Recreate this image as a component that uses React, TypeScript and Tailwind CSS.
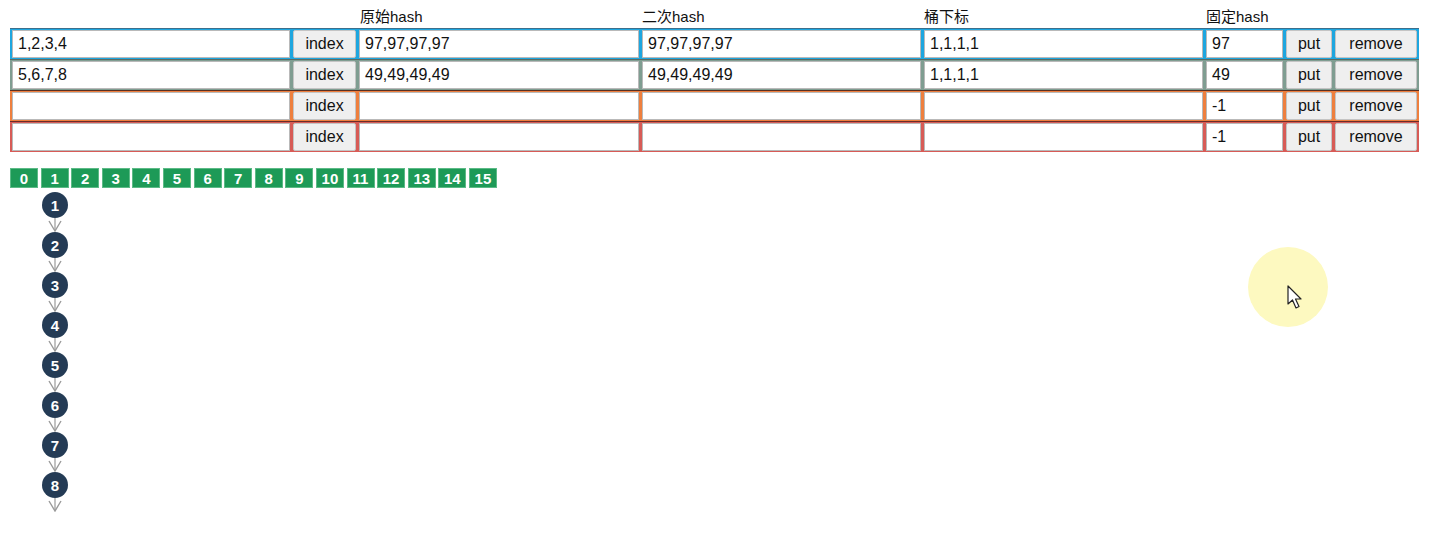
const rows = [
  { key: '1,2,3,4', raw: '97,97,97,97', second: '97,97,97,97', idx: '1,1,1,1', fixed: '97', bg: 'bg-[#1ea6df]', top: 'border-[#3d6f8c]' },
  { key: '5,6,7,8', raw: '49,49,49,49', second: '49,49,49,49', idx: '1,1,1,1', fixed: '49', bg: 'bg-[#7f9d91]', top: 'border-[#5a6c64]' },
  { key: '', raw: '', second: '', idx: '', fixed: '-1', bg: 'bg-[#ee7f3e]', top: 'border-[#5a2f22]' },
  { key: '', raw: '', second: '', idx: '', fixed: '-1', bg: 'bg-[#d75b56]', top: 'border-[#6a2c2a]' },
];

const cols = 'grid grid-cols-[278px_63px_280px_279px_279px_77px_46px_82px] gap-x-[3px]';

function Field({ value }: { value: string }) {
  return (
    <div className="h-[28px] bg-white border border-[#b9b9b9] px-[5px] flex items-center text-[16px] text-[#111] leading-none">
      {value}
    </div>
  );
}

function Btn({ label }: { label: string }) {
  return (
    <div className="h-[28px] bg-[#efefef] border border-[#c4c4c4] rounded-[2px] flex items-center justify-center text-[16px] text-[#111] leading-none">
      {label}
    </div>
  );
}

function Arrow() {
  return (
    <svg width="30" height="14" viewBox="0 0 30 14" className="block">
      <line x1="15" y1="0" x2="15" y2="13" stroke="#9a9a9a" strokeWidth="1.2" />
      <polyline points="9,3 15,13 21,3" fill="none" stroke="#9a9a9a" strokeWidth="1.4" />
    </svg>
  );
}

export default function App() {
  return (
    <div className="relative w-[1454px] h-[539px] bg-white overflow-hidden font-['Liberation_Sans','Noto_Sans_CJK_SC',sans-serif]">
      <div className="pl-[12px] pt-[6px]">
        {/* column titles */}
        <div className={`${cols} h-[22px] items-end pb-[1px] text-[15px] text-[#111]`}>
          <div />
          <div />
          <div className="pl-[1px]">原始hash</div>
          <div>二次hash</div>
          <div>桶下标</div>
          <div>固定hash</div>
          <div />
          <div />
        </div>
      </div>

      <div className="ml-[10px] w-[1409px]">
        {rows.map((r, i) => (
          <div key={i} className={`${r.bg} ${r.top} border-t px-[2px] pt-[1px] pb-[1px] ${cols}`}>
            <Field value={r.key} />
            <Btn label="index" />
            <Field value={r.raw} />
            <Field value={r.second} />
            <Field value={r.idx} />
            <Field value={r.fixed} />
            <Btn label="put" />
            <Btn label="remove" />
          </div>
        ))}
      </div>

      {/* buckets */}
      <div className="ml-[10px] mt-[16px] flex gap-[2.6px]">
        {Array.from({ length: 16 }, (_, i) => (
          <div
            key={i}
            className="w-[28px] h-[20px] bg-[#1d9a57] border border-[#5cba86] flex items-center justify-center text-white font-bold text-[15px] leading-none"
          >
            {i}
          </div>
        ))}
      </div>

      {/* chain in bucket 1 */}
      <div className="ml-[40px] mt-[4px] flex flex-col items-center w-[30px]">
        {[1, 2, 3, 4, 5, 6, 7, 8].map((n) => (
          <div key={n} className="flex flex-col items-center">
            <div className="w-[26px] h-[26px] rounded-full bg-[#243b55] flex items-center justify-center text-white font-bold text-[15px] leading-none">
              {n}
            </div>
            <Arrow />
          </div>
        ))}
      </div>

      {/* cursor highlight */}
      <div className="absolute left-[1248px] top-[247px] w-[80px] h-[80px] rounded-full bg-[#fdf9c0]" />
      <svg className="absolute left-[1287px] top-[285px]" width="16" height="26" viewBox="0 0 16 26">
        <path d="M1 1 L1 19 L5.5 15 L9 23 L12 21.5 L8.5 14 L14 14 Z" fill="#fff" stroke="#222" strokeWidth="1.2" strokeLinejoin="round" />
      </svg>
    </div>
  );
}
